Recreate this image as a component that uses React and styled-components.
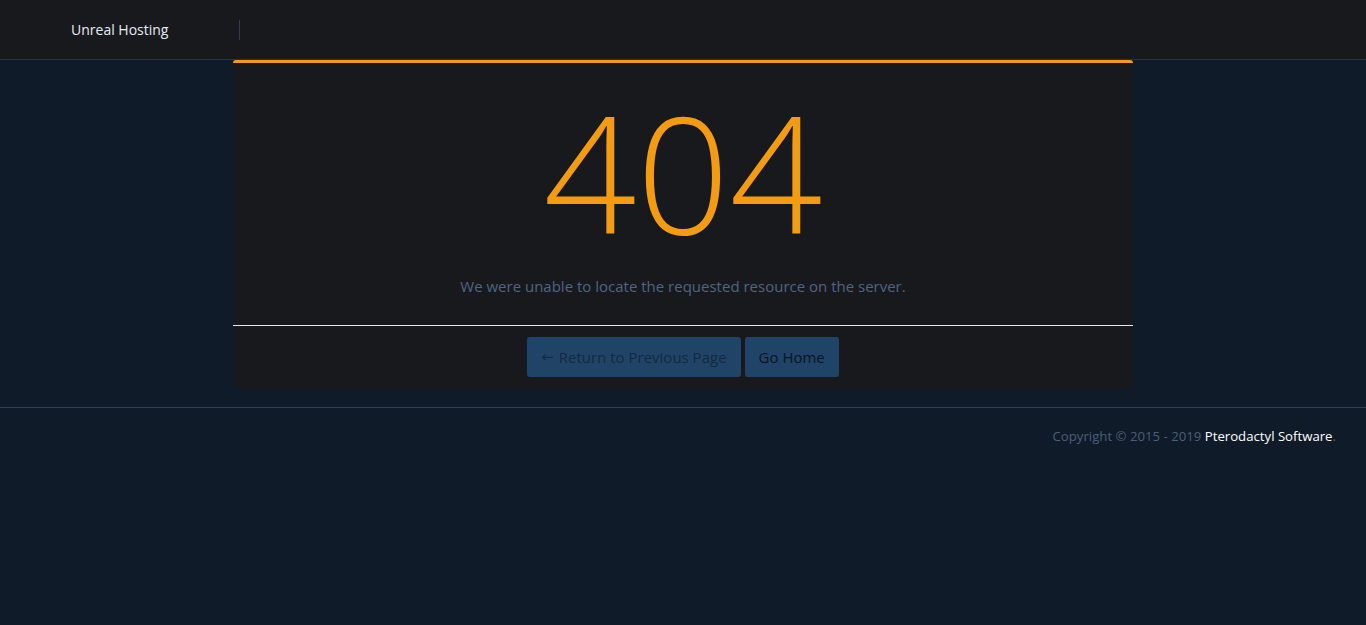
import React from "react"
import styled, { createGlobalStyle } from "styled-components"

const GlobalStyle = createGlobalStyle`
  html, body {
    margin: 0;
    padding: 0;
    background: #0f1b28;
    font-family: "Open Sans", "Liberation Sans", sans-serif;
  }
  body {
    min-height: 100vh;
  }
`

const Page = styled.div`
  min-width: 1380px;
  min-height: 100vh;
  background: #0f1b28;
  color: #4e6585;
  display: flex;
  flex-direction: column;
`

const TopBar = styled.header`
  height: 59px;
  background: #18191c;
  border-bottom: 1px solid #22344a;
  display: flex;
  align-items: center;
`

const Brand = styled.a`
  width: 168px;
  padding-left: 71px;
  font-size: 14px;
  color: #e6ecf3;
  text-decoration: none;
`

const BarDivider = styled.span`
  width: 1px;
  height: 20px;
  background: #2b3f57;
`

const Main = styled.main`
  display: flex;
  justify-content: center;
  padding-bottom: 19px;
  padding-right: 14px;
`

const Card = styled.section`
  width: 900px;
  background: #18191c;
  border-top: 3px solid #f39c12;
  border-radius: 3px;
`

const CardBody = styled.div`
  padding: 18px 0 28px;
  text-align: center;
`

const Code = styled.h1`
  margin: 0;
  font-size: 163px;
  line-height: 180px;
  font-weight: 300;
  color: #f39c12;
`

const Message = styled.p`
  margin: 14px 0 0;
  font-size: 15px;
  line-height: 22px;
  color: #4e6585;
`

const CardFooter = styled.div`
  border-top: 1px solid #e8e8e8;
  padding: 11px 0 11px;
  display: flex;
  justify-content: center;
  gap: 4px;
`

const Button = styled.a`
  height: 40px;
  padding: 0 14px;
  display: flex;
  align-items: center;
  border-radius: 3px;
  background: #1f4468;
  font-size: 15px;
  color: ${ props => props.muted ? "#16293e" : "#0b1520" };
  text-decoration: none;
  cursor: pointer;
`

const Arrow = styled.span`
  font-family: "DejaVu Sans", sans-serif;
  font-size: 15px;
  margin-right: 5px;
`

const Footer = styled.footer`
  border-top: 1px solid #2b3f54;
  padding: 18px 44px 0 0;
  text-align: right;
  font-size: 13.2px;
  line-height: 20px;
  color: #4b5f78;
`

const FooterLink = styled.a`
  color: #ffffff;
  text-decoration: none;
`

export default function App() {
  return (
    <Page>
      <GlobalStyle />
      <TopBar>
        <Brand href="#">Unreal Hosting</Brand>
        <BarDivider />
      </TopBar>
      <Main>
        <Card>
          <CardBody>
            <Code>404</Code>
            <Message>We were unable to locate the requested resource on the server.</Message>
          </CardBody>
          <CardFooter>
            <Button muted><Arrow>&larr;</Arrow>Return to Previous Page</Button>
            <Button>Go Home</Button>
          </CardFooter>
        </Card>
      </Main>
      <Footer>
        Copyright &copy; 2015 - 2019 <FooterLink href="#">Pterodactyl Software</FooterLink>.
      </Footer>
    </Page>
  )
}
